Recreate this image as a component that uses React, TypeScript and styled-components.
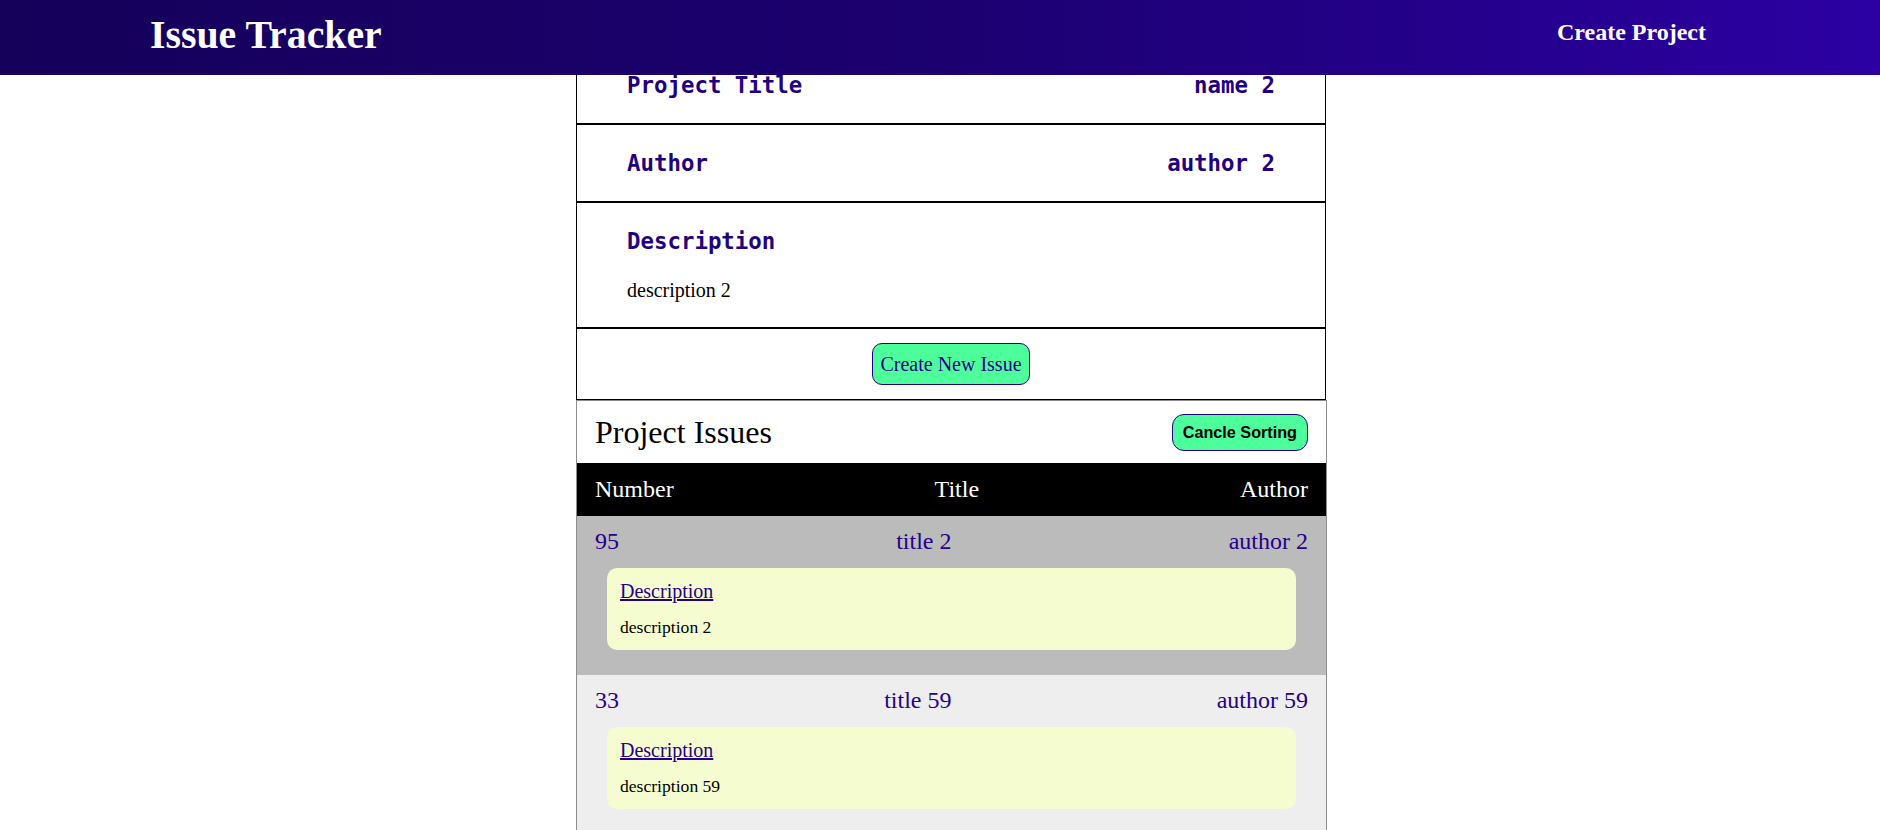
import React from "react";
import styled, { createGlobalStyle } from "styled-components";

const GlobalStyle = createGlobalStyle`
  html, body {
    margin: 0;
    padding: 0;
    background: #ffffff;
    font-family: "Liberation Serif", "Times New Roman", serif;
  }
  * { box-sizing: border-box; }
`;

const INDIGO = "#26008a";

const Header = styled.header`
  position: fixed;
  top: 0;
  left: 0;
  right: 0;
  height: 75px;
  z-index: 10;
  display: flex;
  align-items: flex-start;
  justify-content: space-between;
  padding: 0 174px 0 150px;
  background: linear-gradient(90deg, #15005a 0%, #1c0070 50%, #2c00a3 100%);
`;

const Brand = styled.h1`
  margin: 0;
  padding-top: 12px;
  font-family: "Liberation Serif", "Times New Roman", serif;
  font-size: 39.8px;
  font-weight: 700;
  line-height: normal;
  color: #ffffff;
`;

const NavLink = styled.a`
  padding-top: 19px;
  font-family: "Liberation Serif", "Times New Roman", serif;
  font-size: 24px;
  font-weight: 700;
  line-height: normal;
  color: #ffffff;
  text-decoration: none;
  cursor: pointer;
`;

const Main = styled.main`
  display: flex;
  justify-content: center;
  padding: 46px 0 0 22px;
`;

const Column = styled.div`
  width: 750px;
  display: flex;
  flex-direction: column;
`;

const InfoRow = styled.div<{ $stack?: boolean }>`
  border: 1px solid #000000;
  padding: 25px 50px;
  display: flex;
  flex-direction: ${(p) => (p.$stack ? "column" : "row")};
  justify-content: space-between;
  align-items: ${(p) => (p.$stack ? "flex-start" : "center")};
`;

const InfoLabel = styled.h2`
  margin: 0;
  font-family: "DejaVu Sans Mono", "Liberation Mono", monospace;
  font-size: 22.4px;
  font-weight: 700;
  line-height: 26px;
  color: #1f0080;
`;

const InfoText = styled.p`
  margin: 25px 0 0;
  font-family: "Liberation Serif", "Times New Roman", serif;
  font-size: 20px;
  line-height: 23px;
  color: #000000;
`;

const ButtonRow = styled.div`
  border: 1px solid #000000;
  padding: 14px 0;
  display: flex;
  justify-content: center;
`;

const GreenButton = styled.button<{ $sans?: boolean }>`
  background: #4dff9a;
  border: 1px solid #23007f;
  border-radius: ${(p) => (p.$sans ? "12px" : "10px")};
  padding: ${(p) => (p.$sans ? "8px 10px" : "8px 7px")};
  font-family: ${(p) =>
    p.$sans ? `"Liberation Sans", Arial, sans-serif` : `"Liberation Serif", "Times New Roman", serif`};
  font-size: ${(p) => (p.$sans ? "16.2px" : "20px")};
  font-weight: ${(p) => (p.$sans ? 700 : 400)};
  line-height: ${(p) => (p.$sans ? "19px" : "24px")};
  color: ${(p) => (p.$sans ? "#000000" : INDIGO)};
  cursor: pointer;
`;

const IssuesSection = styled.section`
  border: 1px solid #8c8c8c;
  border-bottom: none;
  margin-right: -1px;
`;

const IssuesTop = styled.div`
  height: 62px;
  padding: 0 18px;
  display: flex;
  justify-content: space-between;
  align-items: center;
`;

const IssuesTitle = styled.h2`
  margin: 0;
  font-family: "Liberation Serif", "Times New Roman", serif;
  font-size: 32px;
  font-weight: 400;
  line-height: normal;
  color: #000000;
`;

const TableHead = styled.div`
  height: 53px;
  padding: 0 18px;
  background: #000000;
  display: flex;
  justify-content: space-between;
  align-items: center;
  font-size: 24px;
  color: #ffffff;
`;

const IssueRow = styled.div<{ $shade: string }>`
  background: ${(p) => p.$shade};
  padding: 12px 18px 25px;
`;

const IssueLine = styled.div`
  display: flex;
  justify-content: space-between;
  font-size: 24px;
  line-height: normal;
  color: ${INDIGO};
`;

const DescBox = styled.div`
  margin: 13px 12px 0;
  padding: 12px 12px 12px 13px;
  border-radius: 10px;
  background: #f5fdd0;
`;

const DescLink = styled.a`
  display: block;
  font-size: 20px;
  line-height: normal;
  color: ${INDIGO};
  text-decoration: underline;
  cursor: pointer;
`;

const DescText = styled.p`
  margin: 14px 0 0;
  font-size: 17.6px;
  line-height: normal;
  color: #000000;
`;

const issues = [
  { number: 95, title: "title 2", author: "author 2", description: "description 2", shade: "#bbbbbb" },
  { number: 33, title: "title 59", author: "author 59", description: "description 59", shade: "#eeeeee" },
];

export default function App() {
  return (
    <>
      <GlobalStyle />
      <Header>
        <Brand>Issue Tracker</Brand>
        <NavLink>Create Project</NavLink>
      </Header>
      <Main>
        <Column>
          <InfoRow>
            <InfoLabel>Project Title</InfoLabel>
            <InfoLabel>name 2</InfoLabel>
          </InfoRow>
          <InfoRow>
            <InfoLabel>Author</InfoLabel>
            <InfoLabel>author 2</InfoLabel>
          </InfoRow>
          <InfoRow $stack>
            <InfoLabel>Description</InfoLabel>
            <InfoText>description 2</InfoText>
          </InfoRow>
          <ButtonRow>
            <GreenButton>Create New Issue</GreenButton>
          </ButtonRow>
          <IssuesSection>
            <IssuesTop>
              <IssuesTitle>Project Issues</IssuesTitle>
              <GreenButton $sans>Cancle Sorting</GreenButton>
            </IssuesTop>
            <TableHead>
              <span>Number</span>
              <span>Title</span>
              <span>Author</span>
            </TableHead>
            {issues.map((it) => (
              <IssueRow key={it.number} $shade={it.shade}>
                <IssueLine>
                  <span>{it.number}</span>
                  <span>{it.title}</span>
                  <span>{it.author}</span>
                </IssueLine>
                <DescBox>
                  <DescLink>Description</DescLink>
                  <DescText>{it.description}</DescText>
                </DescBox>
              </IssueRow>
            ))}
          </IssuesSection>
        </Column>
      </Main>
    </>
  );
}
